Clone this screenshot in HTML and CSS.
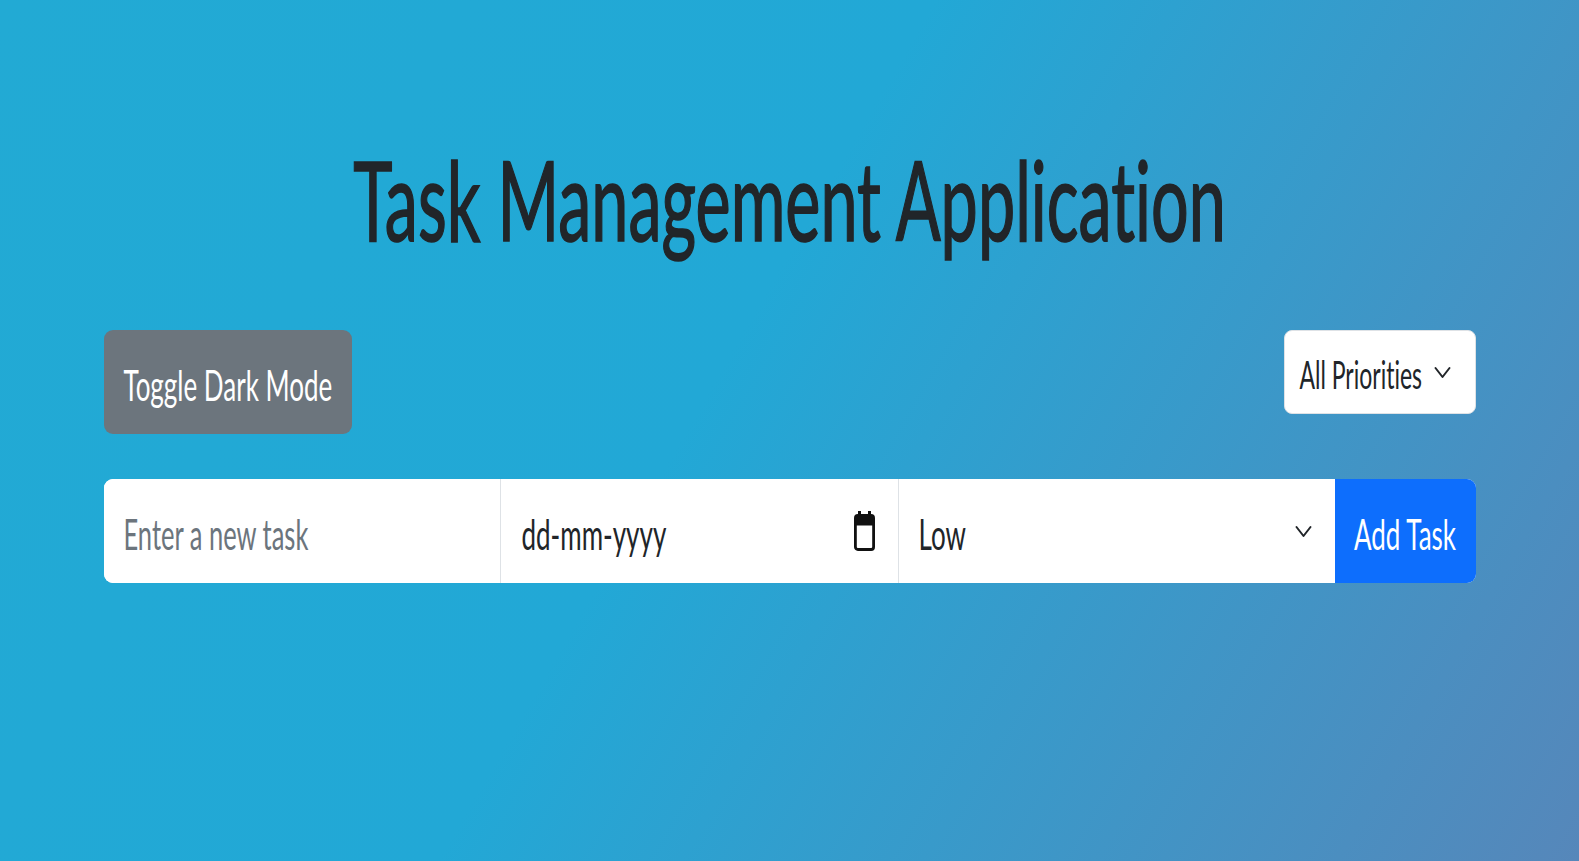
FILE: index.html
```html
<!DOCTYPE html>
<html lang="en">
<head>
<meta charset="utf-8">
<title>Task Management Application</title>
<link rel="stylesheet" href="styles.css">
</head>
<body>
<main class="app">
  <h1 class="title"><span class="tx">Task Management Application</span></h1>

  <div class="toolbar">
    <button class="btn btn-toggle" type="button"><span class="tx">Toggle Dark Mode</span></button>
    <div class="filter">
      <span class="tx">All Priorities</span>
      <svg class="chev" viewBox="0 0 17 13" width="17" height="13" aria-hidden="true"><path d="M1.5 2 L8.5 11 L15.5 2" fill="none" stroke="#212529" stroke-width="2" stroke-linecap="round" stroke-linejoin="round"/></svg>
    </div>
  </div>

  <form class="task-form">
    <div class="field field-task"><input class="task-input" type="text" placeholder="Enter a new task"></div>
    <div class="field field-date">
      <span class="tx">dd-mm-yyyy</span>
      <svg class="cal" viewBox="0 0 21 40" width="21" height="40" aria-hidden="true">
        <rect x="4" y="0" width="3" height="6" fill="#111"/>
        <rect x="14" y="0" width="3" height="6" fill="#111"/>
        <rect x="1.4" y="4.5" width="18.2" height="34" rx="2.5" fill="none" stroke="#111" stroke-width="2.8"/>
        <rect x="1.4" y="4.5" width="18.2" height="10" fill="#111"/>
      </svg>
    </div>
    <div class="field field-priority">
      <span class="tx">Low</span>
      <svg class="chev" viewBox="0 0 17 13" width="17" height="13" aria-hidden="true"><path d="M1.5 2 L8.5 11 L15.5 2" fill="none" stroke="#212529" stroke-width="2" stroke-linecap="round" stroke-linejoin="round"/></svg>
    </div>
    <button class="btn btn-add" type="button"><span class="tx">Add Task</span></button>
  </form>
</main>
</body>
</html>
```

FILE: styles.css
```css
* {
  box-sizing: border-box;
}

html, body {
  margin: 0;
  padding: 0;
}

body {
  min-height: 100vh;
  font-family: Lato, "Open Sans", "Noto Sans", sans-serif;
  font-variant-ligatures: none;
  color: #212529;
  background: linear-gradient(120deg, #22aad4 0%, #22a8d6 45%, #5687ba 100%);
}

.tx {
  display: inline-block;
  line-height: 1;
  white-space: nowrap;
  transform: translateY(2px) scaleY(1.66);
}

.app {
  width: 1372px;
  margin: 0 auto;
  padding-top: 147px;
}

.title {
  margin: 0;
  height: 100px;
  display: flex;
  align-items: center;
  justify-content: center;
  font-size: 66.5px;
  font-weight: 400;
  color: #212529;
  -webkit-text-stroke: 1px #212529;
}

.title .tx {
  transform: translateY(1px) scaleY(1.66);
}

.toolbar {
  margin-top: 83px;
  display: flex;
  justify-content: space-between;
  align-items: flex-start;
}

.btn {
  border: 0;
  font-family: inherit;
  font-size: 26px;
  color: #fff;
  cursor: pointer;
  display: flex;
  align-items: center;
}

.btn-toggle {
  height: 104px;
  padding: 0 20px;
  background: #6c757d;
  border-radius: 9px;
}

.filter {
  width: 192px;
  height: 84px;
  padding: 0 24px 0 15px;
  background: #fff;
  border: 1px solid #dee2e6;
  border-radius: 8px;
  display: flex;
  align-items: center;
  justify-content: space-between;
  font-size: 23px;
}

.filter .tx {
  transform: translateY(2px) scaleY(1.72);
}

.chev {
  display: block;
  flex-shrink: 0;
}

.task-form {
  margin-top: 45px;
  height: 104px;
  display: grid;
  grid-template-columns: 396px 398px 1fr 141px;
  border-radius: 9px;
  overflow: hidden;
  background: #fff;
}

.field {
  height: 104px;
  background: #fff;
  display: flex;
  align-items: center;
  font-size: 26px;
  border-left: 1px solid #dee2e6;
}

.field-task {
  border-left: 0;
  padding-left: 20px;
}

.task-input {
  width: 100%;
  height: 34px;
  border: 0;
  outline: 0;
  padding: 0;
  background: transparent;
  font-family: inherit;
  font-size: 25.5px;
  color: #212529;
  transform: translateY(2px) scaleY(1.68);
}

.task-input::placeholder {
  color: #6c757d;
  opacity: 1;
}

.field-date {
  padding: 0 23px 0 21px;
  justify-content: space-between;
}

.cal {
  display: block;
  flex-shrink: 0;
}

.field-priority {
  padding: 0 23px 0 20px;
  justify-content: space-between;
}

.btn-add {
  height: 104px;
  justify-content: center;
  background: #0d6efd;
  padding: 0;
}
```
